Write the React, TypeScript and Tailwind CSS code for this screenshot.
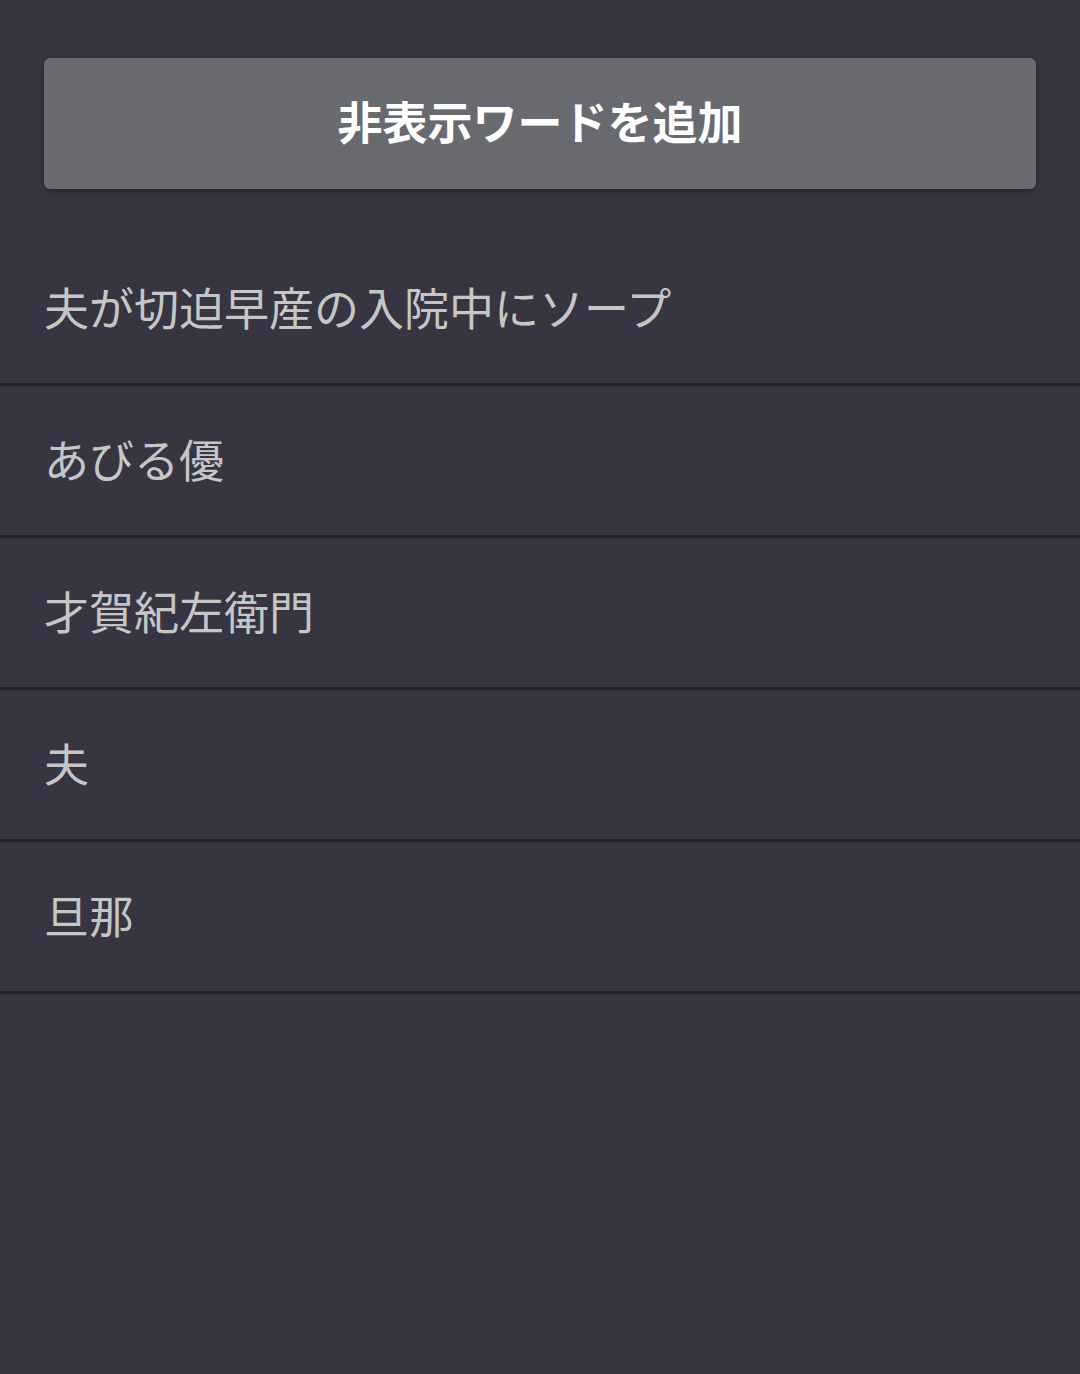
import React from "react";

const words = ["夫が切迫早産の入院中にソープ", "あびる優", "才賀紀左衛門", "夫", "旦那"];

export default function App() {
  return (
    <div
      className="min-h-[1374px] w-full bg-[#363541] pt-[58px]"
      style={{ fontFamily: '"Noto Sans CJK JP", "Noto Sans", sans-serif' }}
    >
      <div className="px-[44px]">
        <button className="flex h-[131px] w-full items-center justify-center rounded-[6px] bg-[#696a70] pb-[6px] text-[45px] leading-none font-bold text-white shadow-[0_2px_6px_rgba(0,0,0,0.35)]">
          非表示ワードを追加
        </button>
      </div>
      <ul className="mt-[45px]">
        {words.map((w) => (
          <li
            key={w}
            className="flex h-[152px] items-center border-b-[3px] border-[#232229] pb-[4px] pl-[44px] text-[45px] text-[#c6c6c6]"
          >
            {w}
          </li>
        ))}
      </ul>
    </div>
  );
}
